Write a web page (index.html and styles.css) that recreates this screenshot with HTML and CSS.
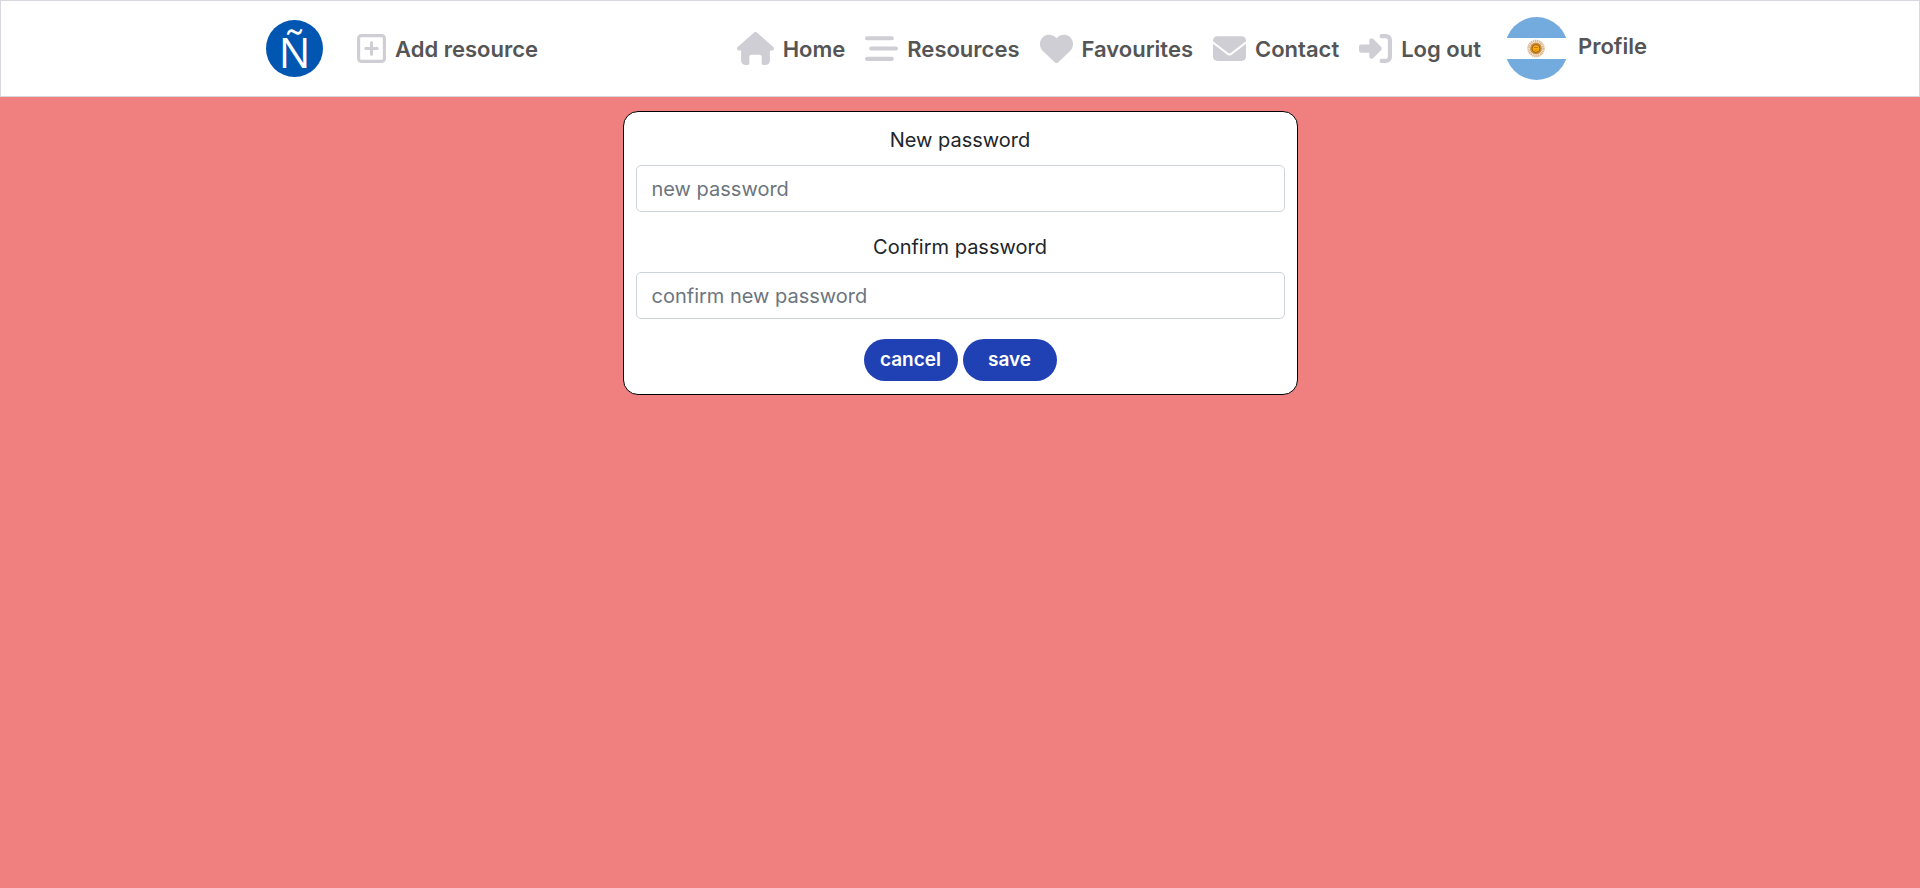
FILE: index.html
```html
<!DOCTYPE html>
<html lang="en">
<head>
<meta charset="utf-8">
<meta name="viewport" content="width=device-width, initial-scale=1">
<title>Change password</title>
<link rel="stylesheet" href="styles.css">
</head>
<body>
<header class="navbar">
  <div class="navbar-inner">
    <a class="brand" href="#" aria-label="Start page">
      <svg class="logo" viewBox="0 0 57 57">
        <circle cx="28.5" cy="28.5" r="28.5" fill="#0056b0"/>
        <text class="logo-letter" x="28.5" y="48" text-anchor="middle">Ñ</text>
      </svg>
    </a>
    <a class="nav-link" href="#">
      <svg class="icon icon-narrow" viewBox="0 0 448 512"><path fill-rule="evenodd" d="M64 32h320c35.300 0 64 28.700 64 64v320c0 35.300-28.700 64-64 64H64c-35.300 0-64-28.700-64-64V96c0-35.300 28.700-64 64-64zM64 80c-8.800 0-16 7.200-16 16v320c0 8.800 7.200 16 16 16h320c8.800 0 16-7.200 16-16V96c0-8.800-7.200-16-16-16zM200 344v-64h-64c-13.300 0-24-10.700-24-24s10.700-24 24-24h64v-64c0-13.300 10.700-24 24-24s24 10.700 24 24v64h64c13.300 0 24 10.700 24 24s-10.700 24-24 24h-64v64c0 13.300-10.700 24-24 24s-24-10.700-24-24z"/></svg>
      <span>Add resource</span>
    </a>
    <nav class="nav-main">
      <a class="nav-link" href="#">
        <svg class="icon icon-wide" viewBox="0 0 576 512"><path d="M575.800 255.500c0 18-15 32.100-32 32.100h-32l.7 160.200c.2 35.500-28.500 64.300-64 64.300H416c-17.700 0-32-14.300-32-32V384c0-17.700-14.300-32-32-32H224c-17.700 0-32 14.300-32 32v96c0 17.700-14.300 32-32 32h-32c-35.300 0-64-28.700-64-64V287.600H32c-18 0-32-14-32-32.100 0-9 3-17 10-24L266.400 8c7-7 15-8 22-8s15 2 21 7l255.400 224.500c8 7 12 15 11 24z"/></svg>
        <span>Home</span>
      </a>
      <a class="nav-link" href="#">
        <svg class="icon" viewBox="0 0 512 512"><path d="M32 64h384a32 32 0 0 1 0 64H32a32 32 0 0 1 0-64zM96 224h384a32 32 0 0 1 0 64H96a32 32 0 0 1 0-64zM32 384h384a32 32 0 0 1 0 64H32a32 32 0 0 1 0-64z"/></svg>
        <span>Resources</span>
      </a>
      <a class="nav-link" href="#">
        <svg class="icon" viewBox="0 0 512 512"><path d="M47.600 300.400L228.300 469.100c7.500 7 17.400 10.900 27.700 10.900s20.200-3.900 27.700-10.900L464.400 300.400c30.400-28.300 47.600-68 47.600-109.500v-5.800c0-69.900-50.500-129.500-119.400-141C347 36.500 300.600 51.400 268 84L256 96 244 84c-32.600-32.600-79-47.500-124.600-39.900C50.500 55.600 0 115.200 0 185.100v5.800c0 41.500 17.200 81.200 47.600 109.500z"/></svg>
        <span>Favourites</span>
      </a>
      <a class="nav-link" href="#">
        <svg class="icon" viewBox="0 0 512 512"><path d="M64 64h384c35 0 64 29 64 64v15L275 326c-11 9-27 9-38 0L0 143v-15c0-35 29-64 64-64zM0 182l217 169c23 18 55 18 78 0l217-169v202c0 35-29 64-64 64H64c-35 0-64-29-64-64z"/></svg>
        <span>Contact</span>
      </a>
      <a class="nav-link" href="#">
        <svg class="icon" viewBox="0 0 512 512"><path d="M217.900 105.900L340.700 228.700c7.200 7.200 11.300 17.100 11.300 27.300s-4.100 20.100-11.300 27.300L217.900 406.100c-6.400 6.400-15 9.900-24 9.900-18.700 0-33.900-15.200-33.900-33.900V320H32c-17.700 0-32-14.300-32-32v-64c0-17.700 14.300-32 32-32h128v-62.100c0-18.700 15.200-33.900 33.900-33.900 9 0 17.600 3.600 24 9.900zM352 416h64c17.700 0 32-14.300 32-32V128c0-17.700-14.300-32-32-32h-64c-17.700 0-32-14.300-32-32s14.300-32 32-32h64c53 0 96 43 96 96v256c0 53-43 96-96 96h-64c-17.700 0-32-14.300-32-32s14.300-32 32-32z"/></svg>
        <span>Log out</span>
      </a>
      <a class="nav-link profile" href="#">
        <svg class="avatar" viewBox="0 0 63 63">
          <clipPath id="round"><circle cx="31.500" cy="31.500" r="31.500"/></clipPath>
          <g clip-path="url(#round)">
            <rect width="63" height="63" fill="#fff"/>
            <rect width="63" height="21" fill="#74abdf"/>
            <rect y="42" width="63" height="21" fill="#74abdf"/>
          </g>
          <circle cx="31" cy="31.500" r="7.500" fill="none" stroke="#dcb98c" stroke-width="2.500" stroke-dasharray="1.500 .5"/>
          <circle cx="31" cy="31.500" r="6" fill="#c98f4c"/>
          <circle cx="31" cy="31.500" r="4" fill="#f5ac0c" stroke="#a55a05" stroke-width="1"/>
          <path d="M29 30.500h4M30 32.500l1 1 1-1" fill="none" stroke="#b56a05" stroke-width=".8"/>
        </svg>
        <span class="profile-name">Profile</span>
      </a>
    </nav>
  </div>
</header>
<main class="page">
  <form class="card">
    <div class="field">
      <label for="new-password">New password</label>
      <input id="new-password" type="password" placeholder="new password">
    </div>
    <div class="field">
      <label for="confirm-password">Confirm password</label>
      <input id="confirm-password" type="password" placeholder="confirm new password">
    </div>
    <div class="actions">
      <button type="button">cancel</button>
      <button type="submit">save</button>
    </div>
  </form>
</main>
</body>
</html>
```
FILE: styles.css
```css
* {
  box-sizing: border-box;
}

body {
  margin: 0;
  min-height: 100vh;
  background: #f08080;
  color: #212529;
  font-family: Inter, "Liberation Sans", sans-serif;
  font-size: 20px;
  line-height: 30px;
}

.navbar {
  background: #fff;
  border: 1px solid #d8d8de;
}

.navbar-inner {
  display: flex;
  align-items: center;
  max-width: 1388px;
  min-height: 95px;
  margin: 0 auto;
}

.brand {
  display: flex;
  margin-right: 34px;
}

.logo {
  width: 57px;
  height: 57px;
  overflow: visible;
}

.logo-letter {
  fill: #fff;
  font-family: "Open Sans", sans-serif;
  font-size: 42px;
  font-weight: 400;
  line-height: 1;
}

.nav-link {
  display: flex;
  align-items: center;
  gap: 9px;
  color: #555;
  font-size: 22px;
  font-weight: 600;
  text-decoration: none;
  white-space: nowrap;
}

.icon {
  width: 33px;
  height: 33px;
  fill: #cfced4;
}

.icon-narrow {
  width: 29px;
}

.icon-wide {
  width: 37px;
}

.nav-main {
  display: flex;
  align-items: center;
  gap: 20px;
  margin-left: auto;
  padding-right: 7px;
}

.profile {
  gap: 10px;
  margin-left: 4px;
}

.avatar {
  width: 63px;
  height: 63px;
}

.profile-name {
  padding-bottom: 6px;
}

.page {
  padding: 14px 16px;
}

.card {
  max-width: 675px;
  margin: 0 auto;
  padding: 13px 12px;
  background: #fff;
  border: 1px solid #000;
  border-radius: 15px;
}

.field {
  display: flex;
  flex-direction: column;
  gap: 10px;
  margin-bottom: 20px;
  text-align: center;
}

.field input {
  width: 100%;
  height: 47px;
  padding: 0 15px;
  background: #fff;
  border: 1px solid #ced4da;
  border-radius: 5px;
  color: #212529;
  font: inherit;
}

.field input::placeholder {
  color: #6c757d;
  opacity: 1;
}

.actions {
  display: flex;
  justify-content: center;
  gap: 5px;
}

.actions button {
  min-width: 94px;
  height: 42px;
  padding: 0 12px;
  background: #2041b4;
  border: 0;
  border-radius: 21px;
  color: #fff;
  font: inherit;
  font-size: 19px;
  font-weight: 600;
}
```
